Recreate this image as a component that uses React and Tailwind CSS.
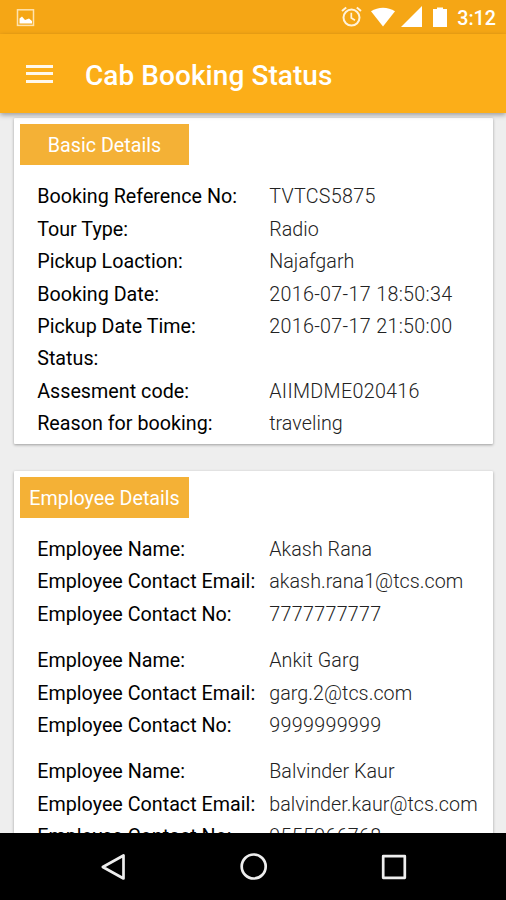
import React from 'react'

const bookingRows = [
    { label: 'Booking Reference No:', value: 'TVTCS5875' },
    { label: 'Tour Type:', value: 'Radio' },
    { label: 'Pickup Loaction:', value: 'Najafgarh' },
    { label: 'Booking Date:', value: '2016-07-17 18:50:34' },
    { label: 'Pickup Date Time:', value: '2016-07-17 21:50:00' },
    { label: 'Status:', value: '' },
    { label: 'Assesment code:', value: 'AIIMDME020416' },
    { label: 'Reason for booking:', value: 'traveling' },
];

const employees = [
    { name: 'Akash Rana', email: 'akash.rana1@tcs.com', phone: '7777777777' },
    { name: 'Ankit Garg', email: 'garg.2@tcs.com', phone: '9999999999' },
    { name: 'Balvinder Kaur', email: 'balvinder.kaur@tcs.com', phone: '9555966768' },
];

const StatusBar = () => (
    <div className="flex h-[34px] shrink-0 items-center justify-between bg-[#f5a615] pl-4 pr-[10px] text-white">
        {/* screenshot notification */}
        <svg className="h-[19px] w-[19px]" viewBox="0 0 19 19" fill="none">
            <rect x="1.5" y="1.8" width="16" height="15.6" stroke="#ffe3ae" strokeWidth="1.5" />
            <path d="M3.500 15.500v-5l2.500-2 3 3.500 4-1.500 3 2.500v2.500z" fill="#fff" />
        </svg>
        <div className="flex items-center">
            {/* alarm */}
            <svg className="h-[21px] w-[21px]" viewBox="0 0 21 21" fill="none" stroke="#fff3db" strokeWidth="2">
                <circle cx="10.500" cy="11.600" r="8" />
                <path d="M10.300 6.800v5.200l3.700 2.300" strokeWidth="1.700" />
                <path d="M1 5l4.200-3.600M20 5l-4.200-3.600" />
            </svg>
            {/* wifi */}
            <svg className="ml-[9px] h-5 w-6" viewBox="0 0 24 20" fill="#fff">
                <path d="M12 19.500L0 4.300C7-.5 17-.5 24 4.300z" />
            </svg>
            {/* signal */}
            <svg className="ml-[6px] h-[21px] w-[21px]" viewBox="0 0 21 21" fill="#fff">
                <path d="M0 21h21V0z" />
            </svg>
            {/* battery */}
            <svg className="ml-[11px] h-5 w-[14px]" viewBox="0 0 14 20" fill="#fff">
                <path d="M0 2h4V.500h6V2h4v18H0z" />
            </svg>
            <span className="ml-[10px] mt-[3px] text-[19.700px] font-medium leading-none">3:12</span>
        </div>
    </div>
);

const AppBar = () => (
    <header className="relative z-10 flex h-[79px] shrink-0 items-center bg-[#fcae18] pl-[26.400px] text-white shadow-[0_2px_5px_rgba(0,0,0,0.35)]">
        <button className="flex w-[27px] flex-col gap-[4.500px]" aria-label="Menu">
            <span className="h-[3px] w-full bg-[#fff8ea]" />
            <span className="h-[3px] w-full bg-[#fff8ea]" />
            <span className="h-[3px] w-full bg-[#fff8ea]" />
        </button>
        <h1 className="ml-[31.600px] mt-1 text-[28px] font-medium leading-none tracking-[0.060px]">Cab Booking Status</h1>
    </header>
);

const Row = ({ label, value, numeric }) => (
    <div className="flex h-[32.400px] items-center">
        <div className="w-[232px] shrink-0 tracking-[0.020px] text-black">{label}</div>
        <div className={`whitespace-nowrap font-light text-[#222] ${numeric ? 'tracking-[0.320px]' : 'tracking-[0.050px]'}`}>{value}</div>
    </div>
);

const Card = ({ title, children }) => (
    <section className="rounded-[1px] bg-white px-1.5 pb-[4px] pt-1.5 shadow-[0_1px_3px_rgba(0,0,0,0.35)]">
        <h2 className="flex h-[41px] w-[169px] items-center justify-center bg-[#f4b136] pt-px text-white">{title}</h2>
        <div className="pl-[17.200px] pt-[15.300px]">{children}</div>
    </section>
);

const NavBar = () => (
    <nav className="flex h-[67px] shrink-0 items-center justify-between bg-black pl-[99px] pr-[98px]">
        <svg className="h-7 w-7" viewBox="0 0 28 28" fill="none" stroke="#eee" strokeWidth="2.700" strokeLinejoin="round">
            <path d="M24.500 2.500v23L3.800 14z" />
        </svg>
        <svg className="h-7 w-7" viewBox="0 0 28 28" fill="none" stroke="#eee" strokeWidth="2.700">
            <circle cx="13.700" cy="13.500" r="12" />
        </svg>
        <svg className="h-7 w-7" viewBox="0 0 28 28" fill="none" stroke="#eee" strokeWidth="2.700" strokeLinejoin="round">
            <rect x="3.200" y="3.200" width="21.600" height="21.600" />
        </svg>
    </nav>
);

const App = () => {
    return (
        <div className="flex h-[900px] w-[506px] flex-col overflow-hidden bg-[#eee] font-[Roboto,sans-serif] text-[19.700px] leading-[23px]">
            <StatusBar />
            <AppBar />
            <main className="flex min-h-0 flex-1 flex-col gap-[27.300px] overflow-hidden pl-3.5 pr-[13px] pt-[5.400px]">
                <Card title="Basic Details">
                    {bookingRows.map((row) => (
                        <Row key={row.label} {...row} numeric={/\d{4}/.test(row.value)} />
                    ))}
                </Card>
                <Card title="Employee Details">
                    <div className="flex flex-col gap-[13.900px]">
                        {employees.map((e) => (
                            <div key={e.email}>
                                <Row label="Employee Name:" value={e.name} />
                                <Row label="Employee Contact Email:" value={e.email} />
                                <Row label="Employee Contact No:" value={e.phone} numeric />
                            </div>
                        ))}
                    </div>
                </Card>
            </main>
            <NavBar />
        </div>
    );
};

export default App
